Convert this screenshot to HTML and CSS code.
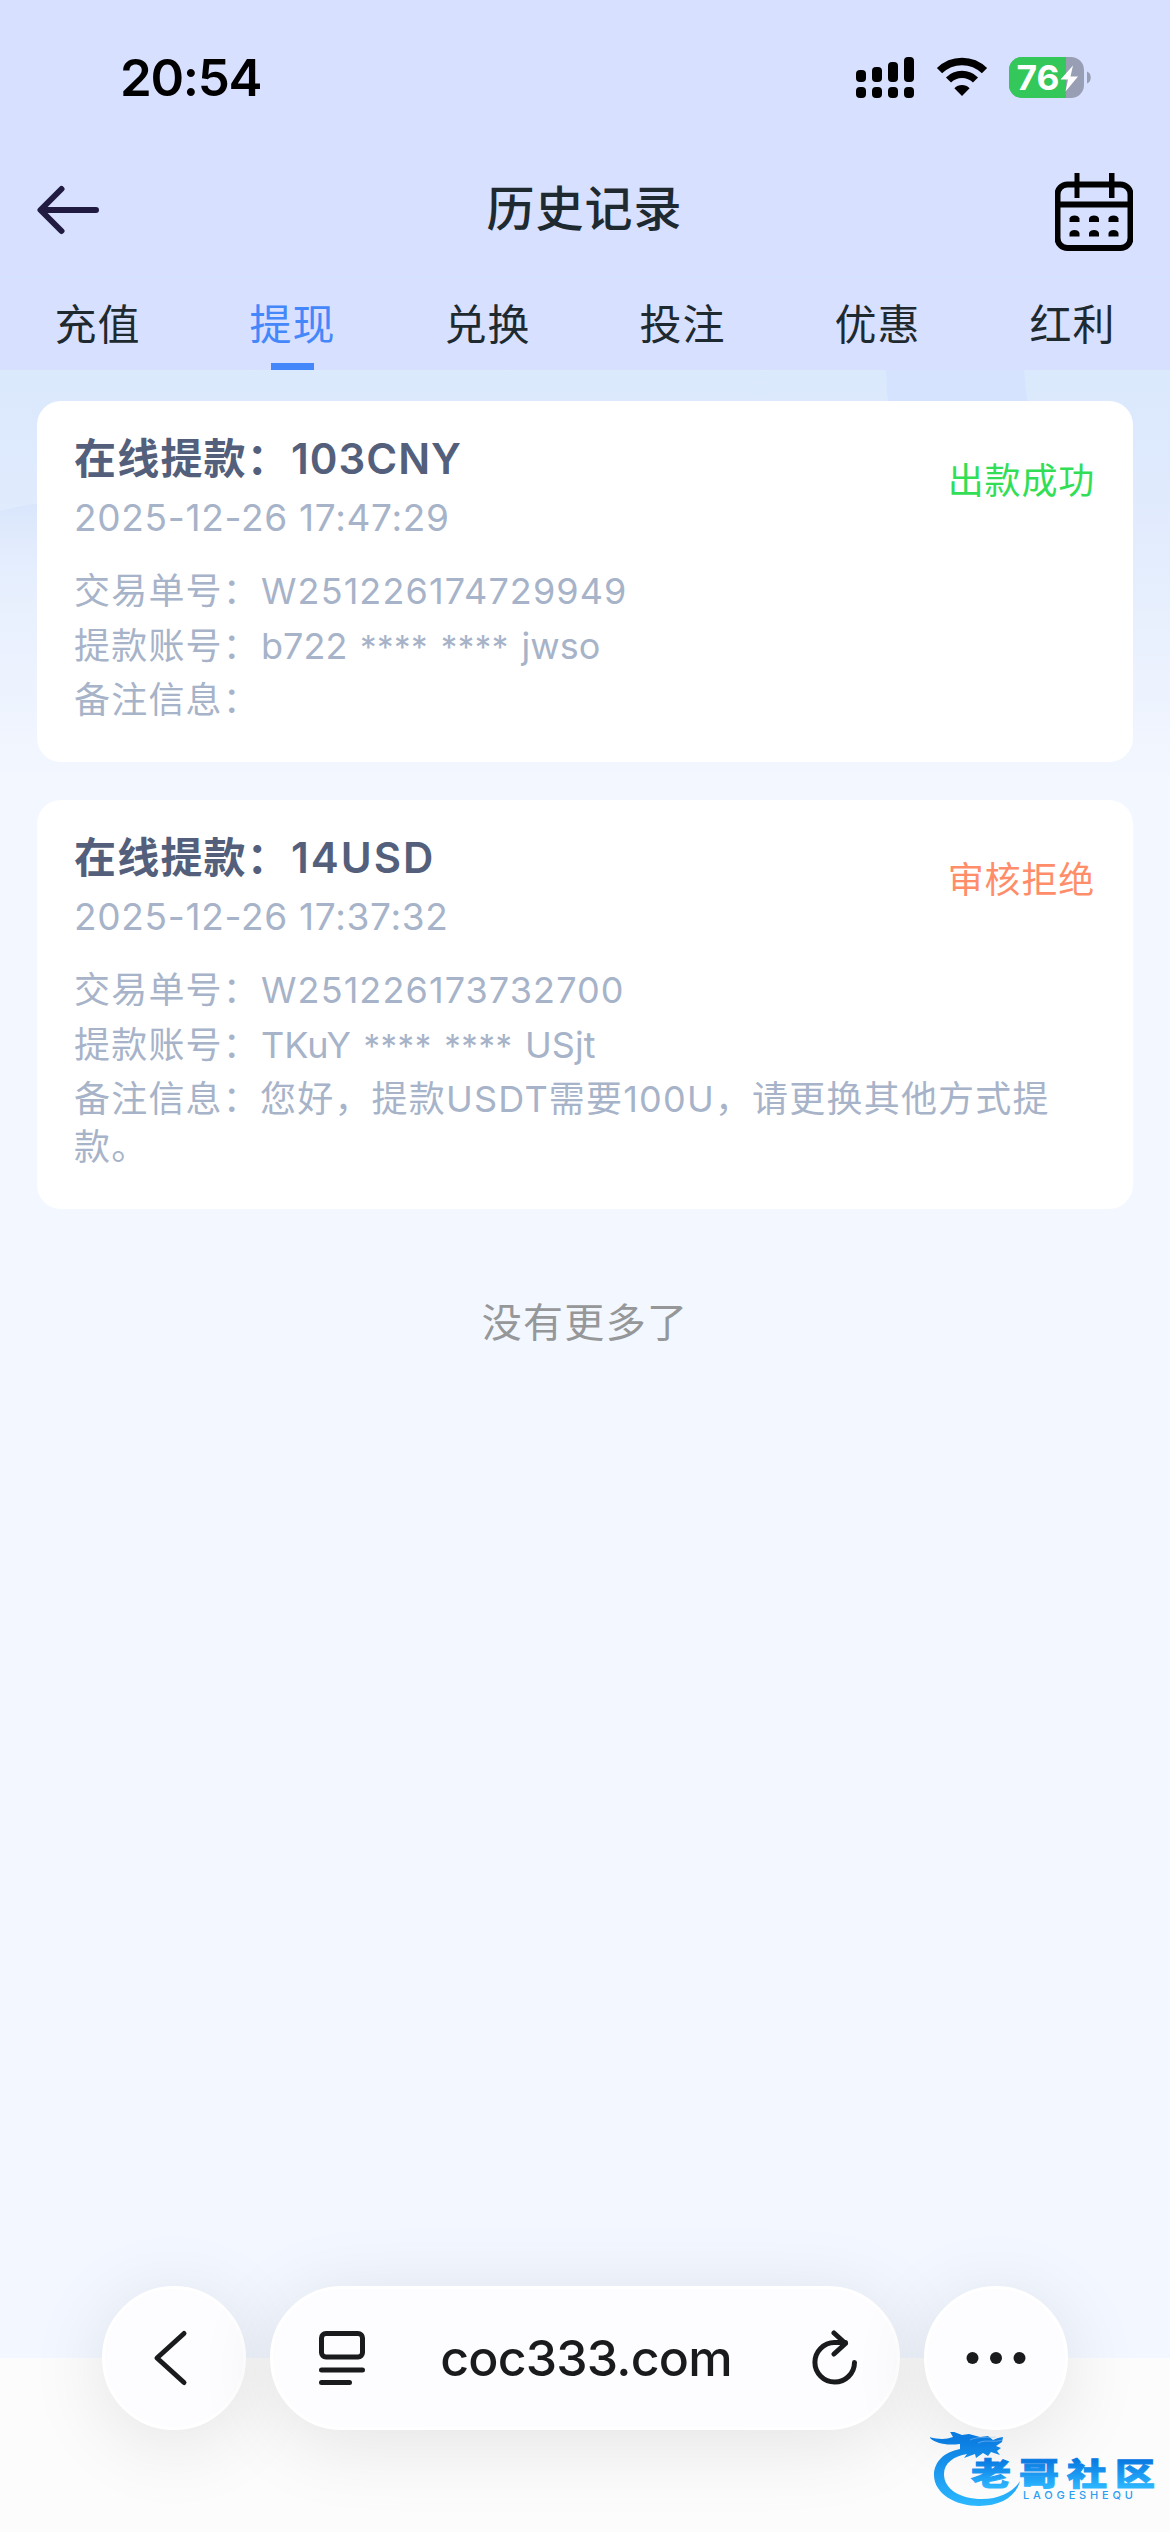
FILE: index.html
```html
<!DOCTYPE html>
<html lang="zh-CN">
<head>
<meta charset="utf-8">
<title>历史记录</title>
<link rel="stylesheet" href="styles.css">
</head>
<body>
<div class="screen">
  <header class="header">
    <div class="statusbar">
      <span class="clock">20:54</span>
      <div class="indicators">
        <svg class="signal" width="58" height="41" viewBox="0 0 58 41">
          <rect x="0" y="13" width="10" height="12" rx="4"/><rect x="16" y="10" width="10" height="15" rx="4"/><rect x="32" y="5" width="10" height="20" rx="4"/><rect x="48" y="0" width="10" height="25" rx="4"/>
          <rect x="0" y="30" width="10" height="11" rx="4"/><rect x="16" y="30" width="10" height="11" rx="4"/><rect x="32" y="30" width="10" height="11" rx="4"/><rect x="48" y="30" width="10" height="11" rx="4"/>
        </svg>
        <svg class="wifi" width="52" height="41" viewBox="0 0 52 41">
          <path d="M3.500 13.700a32 32 0 0 1 45 0" fill="none" stroke="#000" stroke-width="7.400"/>
          <path d="M12.500 23a19.200 19.200 0 0 1 27 0" fill="none" stroke="#000" stroke-width="7.200"/>
          <path d="M26 39l-7.600-7.800a10.800 10.800 0 0 1 15.200 0z"/>
        </svg>
        <svg class="battery" width="83" height="41" viewBox="0 0 83 41">
          <defs><clipPath id="cell"><rect width="75" height="41" rx="13"/></clipPath></defs>
          <g clip-path="url(#cell)"><rect width="75" height="41" fill="#989eb3"/><rect width="57" height="41" fill="#34c759"/></g>
          <path d="M78 14.500c5 1.500 5 10.500 0 12z" fill="#989eb3"/>
          <text class="level" x="7.500" y="33" textLength="43" lengthAdjust="spacingAndGlyphs">76</text>
          <path d="M64 8.500L51.500 22.500h7.500L56.500 34.500 69 19.500h-7.500z" fill="#fff"/>
        </svg>
      </div>
    </div>
    <div class="navbar">
      <svg class="back" width="64" height="50" viewBox="0 0 64 50" fill="none" stroke="#211b42" stroke-width="6" stroke-linecap="round" stroke-linejoin="round"><path d="M60 25H5M25.500 4L4.500 25l21 21"/></svg>
      <h1 class="title">历史记录</h1>
      <svg class="calendar" width="78" height="78" viewBox="0 0 78 78">
        <rect x="2.500" y="11.500" width="73" height="63.500" rx="10" fill="none" stroke="#000" stroke-width="6"/>
        <path d="M0 28.500h78v6H0zM19.500 0h5v25h-5zM54 0h5.500v25H54z"/>
        <path id="dot" d="M14.500 49v-3.500q1-3 5-3t5 3V49z"/>
        <use href="#dot" x="19.500"/><use href="#dot" x="39"/><use href="#dot" y="14.500"/><use href="#dot" x="19.500" y="14.500"/><use href="#dot" x="39" y="14.500"/>
      </svg>
    </div>
    <nav class="tabs">
      <a class="tab">充值</a><a class="tab active">提现</a><a class="tab">兑换</a><a class="tab">投注</a><a class="tab">优惠</a><a class="tab">红利</a>
    </nav>
  </header>

  <main class="content">
    <svg class="backdrop" width="1170" height="480" viewBox="0 0 1170 480">
      <defs>
        <linearGradient id="fade" x2="0" y2="1"><stop offset="0" stop-color="#dbe9fc"/><stop offset=".25" stop-color="#dfeafd"/><stop offset=".85" stop-color="#f3f7ff"/></linearGradient>
        <linearGradient id="hill" x2="0" y2="1"><stop offset="0" stop-color="#d8e5fb"/><stop offset=".3" stop-color="#e5eefd" stop-opacity=".7"/><stop offset="1" stop-color="#f3f7ff" stop-opacity="0"/></linearGradient>
      </defs>
      <rect width="1170" height="480" fill="url(#fade)"/>
      <path d="M886 0h138q1 18 5 40H889q-3-20-3-40z" fill="#d5e3ff"/>
      <path d="M0 141q18-6 60-10v220H0z" fill="url(#hill)"/>
    </svg>
    <article class="card">
      <div class="card-head">
        <div>
          <h2 class="amount">在线提款：<span class="sum">103CNY</span></h2>
          <time class="date">2025-12-26 17:47:29</time>
        </div>
        <span class="state success">出款成功</span>
      </div>
      <div class="details">
        <p>交易单号：<span class="order">W251226174729949</span></p>
        <p>提款账号：<span class="account">b722 <span class="mask">****</span> <span class="mask">****</span> jwso</span></p>
        <p>备注信息：</p>
      </div>
    </article>
    <article class="card">
      <div class="card-head">
        <div>
          <h2 class="amount">在线提款：<span class="sum short">14USD</span></h2>
          <time class="date">2025-12-26 17:37:32</time>
        </div>
        <span class="state rejected">审核拒绝</span>
      </div>
      <div class="details">
        <p>交易单号：<span class="order">W251226173732700</span></p>
        <p>提款账号：<span class="account">TKuY <span class="mask">****</span> <span class="mask">****</span> USjt</span></p>
        <p>备注信息：您好，提款USDT需要100U，请更换其他方式提款。</p>
      </div>
    </article>
    <p class="end">没有更多了</p>
  </main>

  <footer class="browser">
    <button class="glass round prev" aria-label="后退"><svg width="36" height="58" viewBox="0 0 36 58" fill="none" stroke="#1a1b1d" stroke-width="5" stroke-linecap="round" stroke-linejoin="round"><path d="M32 4.500L5 29l27 24.500"/></svg></button>
    <div class="glass address">
      <svg class="reader" width="46" height="54" viewBox="0 0 46 54" fill="none" stroke="#1a1b1d" stroke-width="5" stroke-linecap="round"><rect x="2.500" y="2.500" width="41" height="23.500" rx="4.500"/><path d="M2.500 39h41M2.500 51.500h28"/></svg>
      <span class="host">coc333.com</span>
      <svg class="reload" width="46" height="56" viewBox="0 0 46 56" fill="none" stroke="#1a1b1d" stroke-width="5" stroke-linecap="round" stroke-linejoin="round"><path d="M42.500 32.500A19.800 19.800 0 1 1 22.500 12.500h11M22 3l11.500 10.500L22 24"/></svg>
    </div>
    <button class="glass round" aria-label="更多"><svg width="60" height="14" viewBox="0 0 60 14" fill="#1a1b1d"><circle cx="6.500" cy="7" r="6"/><circle cx="30" cy="7" r="6"/><circle cx="53.500" cy="7" r="6"/></svg></button>
  </footer>

  <svg class="watermark" width="226" height="80" viewBox="0 0 226 80">
    <defs><linearGradient id="blue" gradientUnits="userSpaceOnUse" x1="0" y1="6" x2="0" y2="74"><stop offset="0" stop-color="#0a7be0"/><stop offset="1" stop-color="#2cb8ff"/></linearGradient>
    <linearGradient id="ink" x2="0" y2="1"><stop offset=".25" stop-color="#0a7be2"/><stop offset=".85" stop-color="#2bb5ff"/></linearGradient></defs>
    <path fill="url(#blue)" d="M30 17C14 20 4 30 4 43c0 19 22 31 45 31 21 0 37-9 41-25-6 10-20 18-38 18-22 0-38-10-38-25 0-11 10-18 23-20l-3 4 11-4 1 4 7-5 5 3 3-4 9 3-3-4 4-3-5-2 6-4 1-5-5 1-5 2-5-4-8 1-11-3-7 1-13-5 4 7c-8 3-16 2-24 0 5 6 16 9 31 7z"/>
    <path d="M40 8c8-4 18-2 26-3M48 11c8-4 16 0 24-3" fill="none" stroke="#9dc8ef" stroke-width="1" opacity=".5"/>
    <text class="mark" transform="translate(41 53) scale(1 .76)" textLength="184" fill="url(#ink)" stroke="url(#ink)">老哥社区</text>
    <text class="mark-latin" x="93" y="67" textLength="110">LAOGESHEQU</text>
  </svg>
</div>
</body>
</html>
```
FILE: styles.css
```css
* { box-sizing: border-box; margin: 0; padding: 0; }
body {
  width: 1170px;
  font-family: Inter, "Noto Sans CJK SC", sans-serif;
  color: #1e2a30;
}
.screen {
  position: relative;
  display: flex;
  flex-direction: column;
  width: 1170px;
  height: 2532px;
  overflow: hidden;
  background: linear-gradient(#f3f7ff 0 2358px, #fcfcfc 2358px);
}
svg { display: block; flex: none; }

.header { height: 370px; background: #d8e0ff; }
.statusbar {
  display: flex;
  justify-content: space-between;
  height: 156px;
  padding: 48px 78px 0 120px;
}
.clock { font-size: 51px; line-height: 60px; font-weight: 600; letter-spacing: -1.3px; color: #000; }
.indicators { display: flex; gap: 22px; padding-top: 9px; }
.battery { margin-left: -1px; }
.level { font: 700 34px Inter, sans-serif; fill: #fff; }
.navbar {
  display: flex;
  align-items: center;
  justify-content: space-between;
  height: 122px;
  padding: 0 37px 0 36px;
  border-bottom: 2px solid #d5e2fe;
}
.back { margin: 0 14px 12px 0; }
.calendar { margin-bottom: 8px; }
.title { font-size: 48px; font-weight: 500; line-height: 60px; letter-spacing: 1px; margin-bottom: 15px; }
.tabs { display: grid; grid-template-columns: repeat(6, 1fr); height: 92px; }
.tab {
  display: flex;
  flex-direction: column;
  align-items: center;
  justify-content: space-between;
  font-size: 42px;
  line-height: 60px;
  letter-spacing: 1px;
  padding-top: 17px;
}
.tab.active { color: #4487fb; }
.tab.active::after { content: ""; width: 43px; height: 7px; background: #4487fb; }

.content {
  position: relative;
  display: flex;
  flex-direction: column;
  gap: 38px;
  padding: 31px 37px 0;
}
.backdrop { position: absolute; left: 0; top: 0; }
.card {
  position: relative;
  height: 361px;
  padding: 29px 37px;
  border-radius: 24px;
  background: #fff;
}
.card + .card { height: 409px; }
.card-head { display: flex; justify-content: space-between; }
.amount { font-size: 42px; font-weight: 600; line-height: 58px; letter-spacing: 1.2px; color: #535f7b; }
.sum { margin-left: 1px; letter-spacing: 1px; }
.short { letter-spacing: 2px; }
.date { display: block; font-size: 37px; line-height: 56px; letter-spacing: .7px; margin-top: 2px; }
.date, .details { color: #a7b3c8; }
.state { font-size: 36px; line-height: 48px; letter-spacing: .8px; padding-top: 27px; margin-right: 1px; }
.success { color: #32de56; }
.rejected { color: #ff8d69; }
.details { margin-top: 21px; font-size: 36px; line-height: 48px; letter-spacing: 1.2px; }
.details p + p { margin-top: 6.500px; }
.order { margin-left: 1px; letter-spacing: 1.1px; }
.account { margin-left: 1px; letter-spacing: 0; word-spacing: 2.5px; }
.mask { font-size: 33px; line-height: 1; letter-spacing: .5px; }
.end {
  position: relative;
  margin-top: 46px;
  font-size: 40px;
  line-height: 60px;
  letter-spacing: 1.300px;
  text-align: center;
  color: #969799;
}

.browser {
  display: flex;
  gap: 24px;
  height: 246px;
  margin-top: auto;
  padding: 0 102px;
}
.glass {
  display: flex;
  align-items: center;
  height: 144px;
  border: 3px solid #fff;
  border-radius: 72px;
  background: #fdfdff;
  box-shadow: 0 12px 80px rgba(0, 0, 0, .1);
}
.round { width: 144px; justify-content: center; }
.prev { padding-right: 9px; }
.address { flex: 1; justify-content: space-between; padding: 0 39px 0 46px; }
.host { font-size: 50px; font-weight: 500; letter-spacing: -.8px; margin-right: 5px; color: #1a1b1d; }
.watermark { position: absolute; left: 930px; top: 2432px; }
.mark { font: 900 40px "Noto Sans CJK SC", sans-serif; stroke-width: 1.2px; }
.mark-latin { font: 500 11px Inter, sans-serif; fill: #2b9df2; }
```
